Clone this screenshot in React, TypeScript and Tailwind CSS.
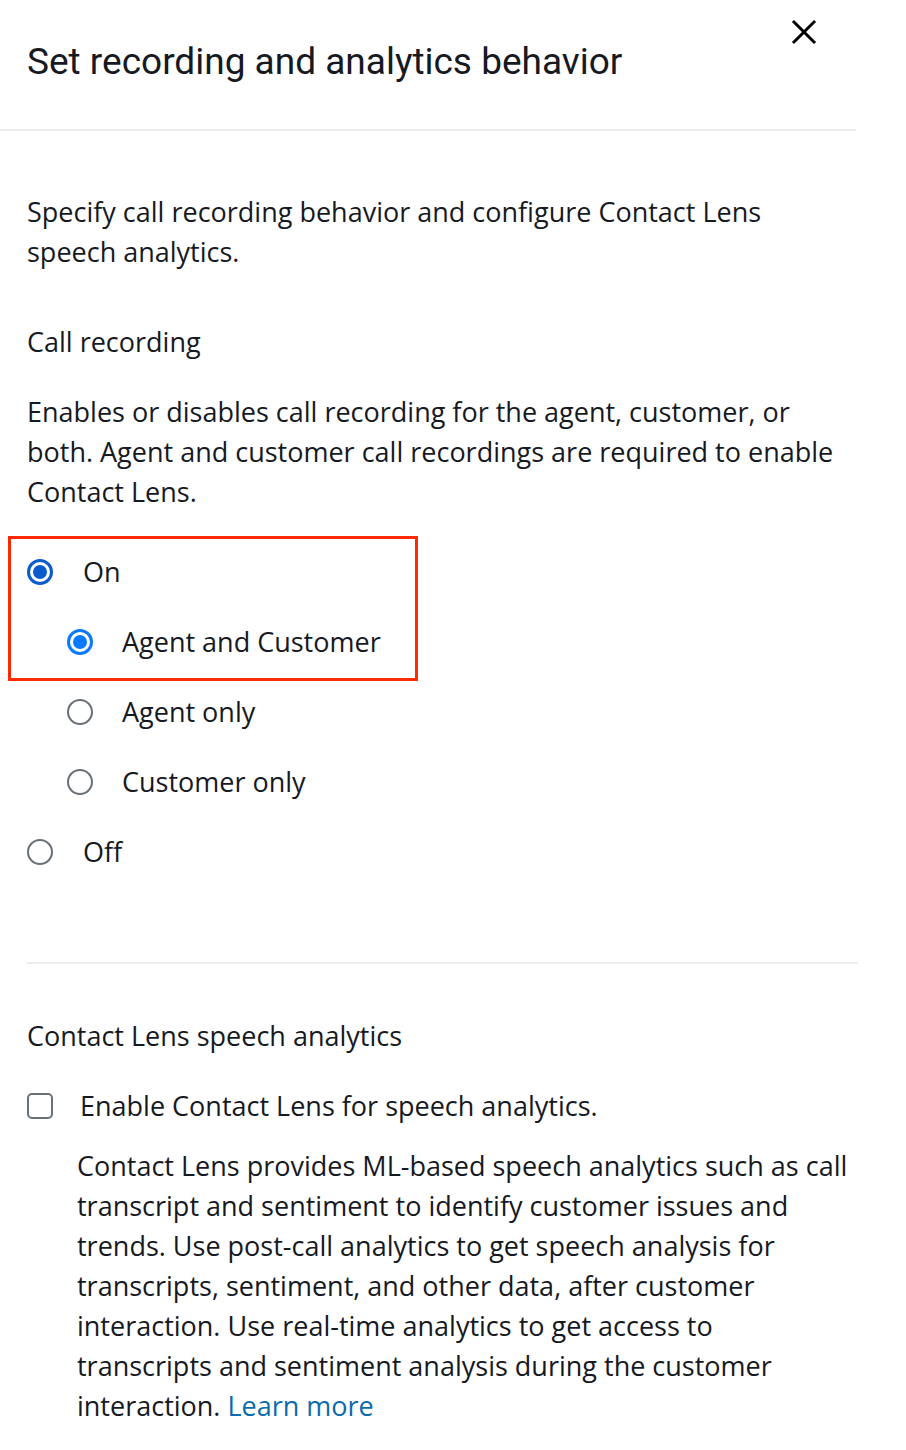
import React from 'react';

const font = { fontFamily: '"Open Sans", "Noto Sans", Arial, sans-serif' };

function Radio({ checked, tone }: { checked?: boolean; tone?: string }) {
    if (!checked) {
        return <span className="block w-[26px] h-[26px] rounded-full border-[2px] border-[#687078] bg-white shrink-0" />;
    }
    return (
        <span className={`flex items-center justify-center w-[26px] h-[26px] rounded-full border-[3px] shrink-0 ${tone === 'dark' ? 'border-[#0a5bcc]' : 'border-[#0a7bff]'}`}>
            <span className={`block w-[14px] h-[14px] rounded-full ${tone === 'dark' ? 'bg-[#0a5bcc]' : 'bg-[#0a7bff]'}`} />
        </span>
    );
}

export default function App() {
    return (
        <div className="w-[906px] min-h-[1450px] bg-white text-[#16191f] text-[27px] leading-[40px]" style={font}>
            {/* header */}
            <div className="w-[856px] h-[131px] border-b-2 border-[#eaeded] relative">
                <h1 className="pl-[27px] pt-[38px] text-[37px] leading-[48px] text-[#16191f]" style={{ fontFamily: 'Roboto, "Noto Sans", sans-serif' }}>
                    Set recording and analytics behavior
                </h1>
                <button className="absolute left-[790px] top-[18px] w-[28px] h-[28px] flex items-center justify-center">
                    <svg width="26" height="26" viewBox="0 0 26 26" fill="none" stroke="#000" strokeWidth="3" strokeLinecap="square">
                        <path d="M3 3L23 23M23 3L3 23" />
                    </svg>
                </button>
            </div>

            <div className="pl-[27px] w-[857px] whitespace-nowrap">
                <p className="pt-[61px]">
                    Specify call recording behavior and configure Contact Lens<br />speech analytics.
                </p>

                <h2 className="mt-[50px] font-medium">Call recording</h2>

                <p className="mt-[30px]">
                    Enables or disables call recording for the agent, customer, or<br />
                    both. Agent and customer call recordings are required to enable<br />
                    Contact Lens.
                </p>
            </div>

            {/* radio group, red box marks the selected choice */}
            <div className="relative pl-[27px] mt-[25px] whitespace-nowrap">
                <div className="absolute left-[8px] top-[-1px] w-[410px] h-[145px] border-[3px] border-[#ff2a00]" />
                <div className="flex flex-col">
                    <label className="flex items-center h-[70px]">
                        <Radio checked tone="dark" />
                        <span className="ml-[30px] font-medium">On</span>
                    </label>
                    <div className="pl-[40px] flex flex-col">
                        <label className="flex items-center h-[70px]">
                            <Radio checked />
                            <span className="ml-[29px] font-medium">Agent and Customer</span>
                        </label>
                        <label className="flex items-center h-[70px]">
                            <Radio />
                            <span className="ml-[29px] font-medium">Agent only</span>
                        </label>
                        <label className="flex items-center h-[70px]">
                            <Radio />
                            <span className="ml-[29px] font-medium">Customer only</span>
                        </label>
                    </div>
                    <label className="flex items-center h-[70px]">
                        <Radio />
                        <span className="ml-[30px] font-medium">Off</span>
                    </label>
                </div>
            </div>

            <div className="ml-[27px] w-[831px] border-t-2 border-[#eaeded] mt-[75px]" />

            <div className="pl-[27px] w-[857px] whitespace-nowrap">
                <h2 className="mt-[52px] font-medium">Contact Lens speech analytics</h2>
                <label className="flex items-center mt-[30px]">
                    <span className="block w-[26px] h-[26px] rounded-[5px] border-[2px] border-[#687078] shrink-0" />
                    <span className="ml-[27px]">Enable Contact Lens for speech analytics.</span>
                </label>
                <p className="pl-[50px] mt-[20px]">
                    Contact Lens provides ML-based speech analytics such as call<br />
                    transcript and sentiment to identify customer issues and<br />
                    trends. Use post-call analytics to get speech analysis for<br />
                    transcripts, sentiment, and other data, after customer<br />
                    interaction. Use real-time analytics to get access to<br />
                    transcripts and sentiment analysis during the customer<br />
                    interaction. <a className="text-[#0a6bad]" href="#">Learn more</a>
                </p>
            </div>
        </div>
    );
}
